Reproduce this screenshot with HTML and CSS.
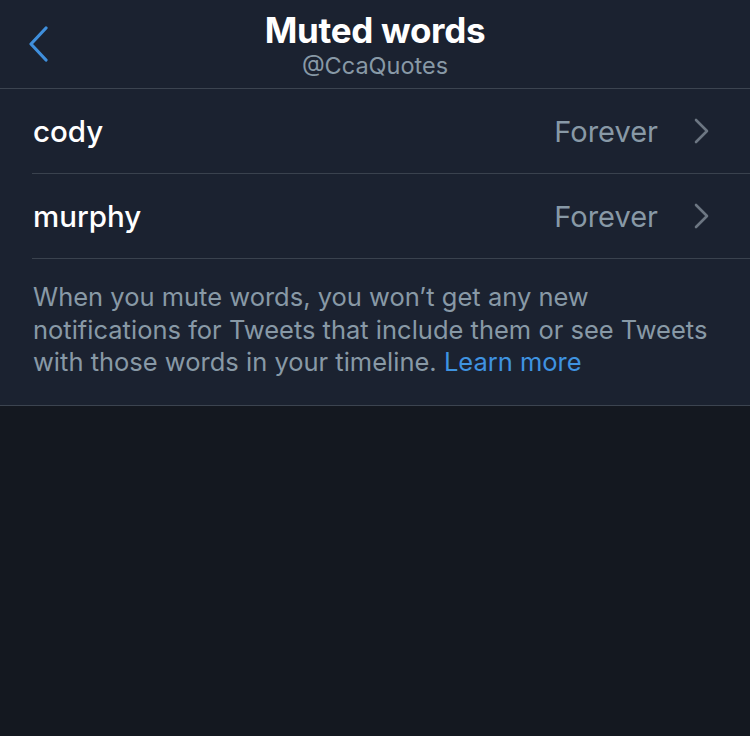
FILE: index.html
```html
<!DOCTYPE html>
<html>
<head>
    <title>Muted words</title>
    <meta charset="UTF-8">
    <meta name="viewport" content="width=device-width, initial-scale=1">
    <link rel="stylesheet" href="styles.css">
</head>
<body>
    <header class="nav">
        <a class="back" href="#">
            <svg width="22" height="36" viewBox="0 0 22 36"><path d="M19 2 L4 18 L19 34" fill="none" stroke="#3f8fdc" stroke-width="3.2" stroke-linecap="round" stroke-linejoin="round"/></svg>
        </a>
        <div class="title">Muted words</div>
        <div class="handle">@CcaQuotes</div>
    </header>
    <section class="panel">
        <ul class="words">
            <li class="word">
                <span class="term">cody</span>
                <span class="duration">Forever</span>
                <svg class="chev" width="16" height="26" viewBox="0 0 16 26"><path d="M2 2 L13 13 L2 24" fill="none" stroke="#6c7682" stroke-width="2.6" stroke-linecap="round" stroke-linejoin="round"/></svg>
            </li>
            <li class="word">
                <span class="term">murphy</span>
                <span class="duration">Forever</span>
                <svg class="chev" width="16" height="26" viewBox="0 0 16 26"><path d="M2 2 L13 13 L2 24" fill="none" stroke="#6c7682" stroke-width="2.6" stroke-linecap="round" stroke-linejoin="round"/></svg>
            </li>
        </ul>
        <p class="note">When you mute words, you won’t get any new notifications for Tweets that include them or see Tweets with those words in your timeline. <a href="#">Learn more</a></p>
    </section>
</body>
</html>
```

FILE: styles.css
```css
body, html {
    margin: 0;
    padding: 0;
    height: 100%;
    background: #141820;
    font-family: Inter, "Liberation Sans", sans-serif;
    overflow: hidden;
}

.nav {
    position: relative;
    height: 88px;
    background: #1b2230;
    border-bottom: 1px solid #3c4450;
    text-align: center;
}

.back {
    position: absolute;
    left: 27px;
    top: 26px;
}

.title {
    padding-top: 10px;
    color: #fff;
    font-size: 35px;
    font-weight: 700;
    line-height: 40px;
    letter-spacing: -0.3px;
}

.handle {
    color: #8899a6;
    font-size: 23.5px;
    line-height: 32px;
}

.panel {
    background: #1b2230;
    border-bottom: 1px solid #3c4450;
}

.words {
    list-style: none;
    margin: 0;
    padding: 0 0 0 32px;
}

.word {
    display: flex;
    align-items: center;
    height: 84px;
    padding-right: 40px;
    border-bottom: 1px solid #3a424e;
}

.term {
    flex: 1;
    color: #fff;
    font-size: 29.5px;
    font-weight: 500;
    padding-left: 1px;
}

.duration {
    color: #8899a6;
    font-size: 29px;
    margin-right: 36px;
}

.note {
    margin: 0;
    padding: 22px 32px 26px 33px;
    color: #8899a6;
    font-size: 25.5px;
    line-height: 32.5px;
}

.note a {
    color: #3f93e0;
    text-decoration: none;
}
```
